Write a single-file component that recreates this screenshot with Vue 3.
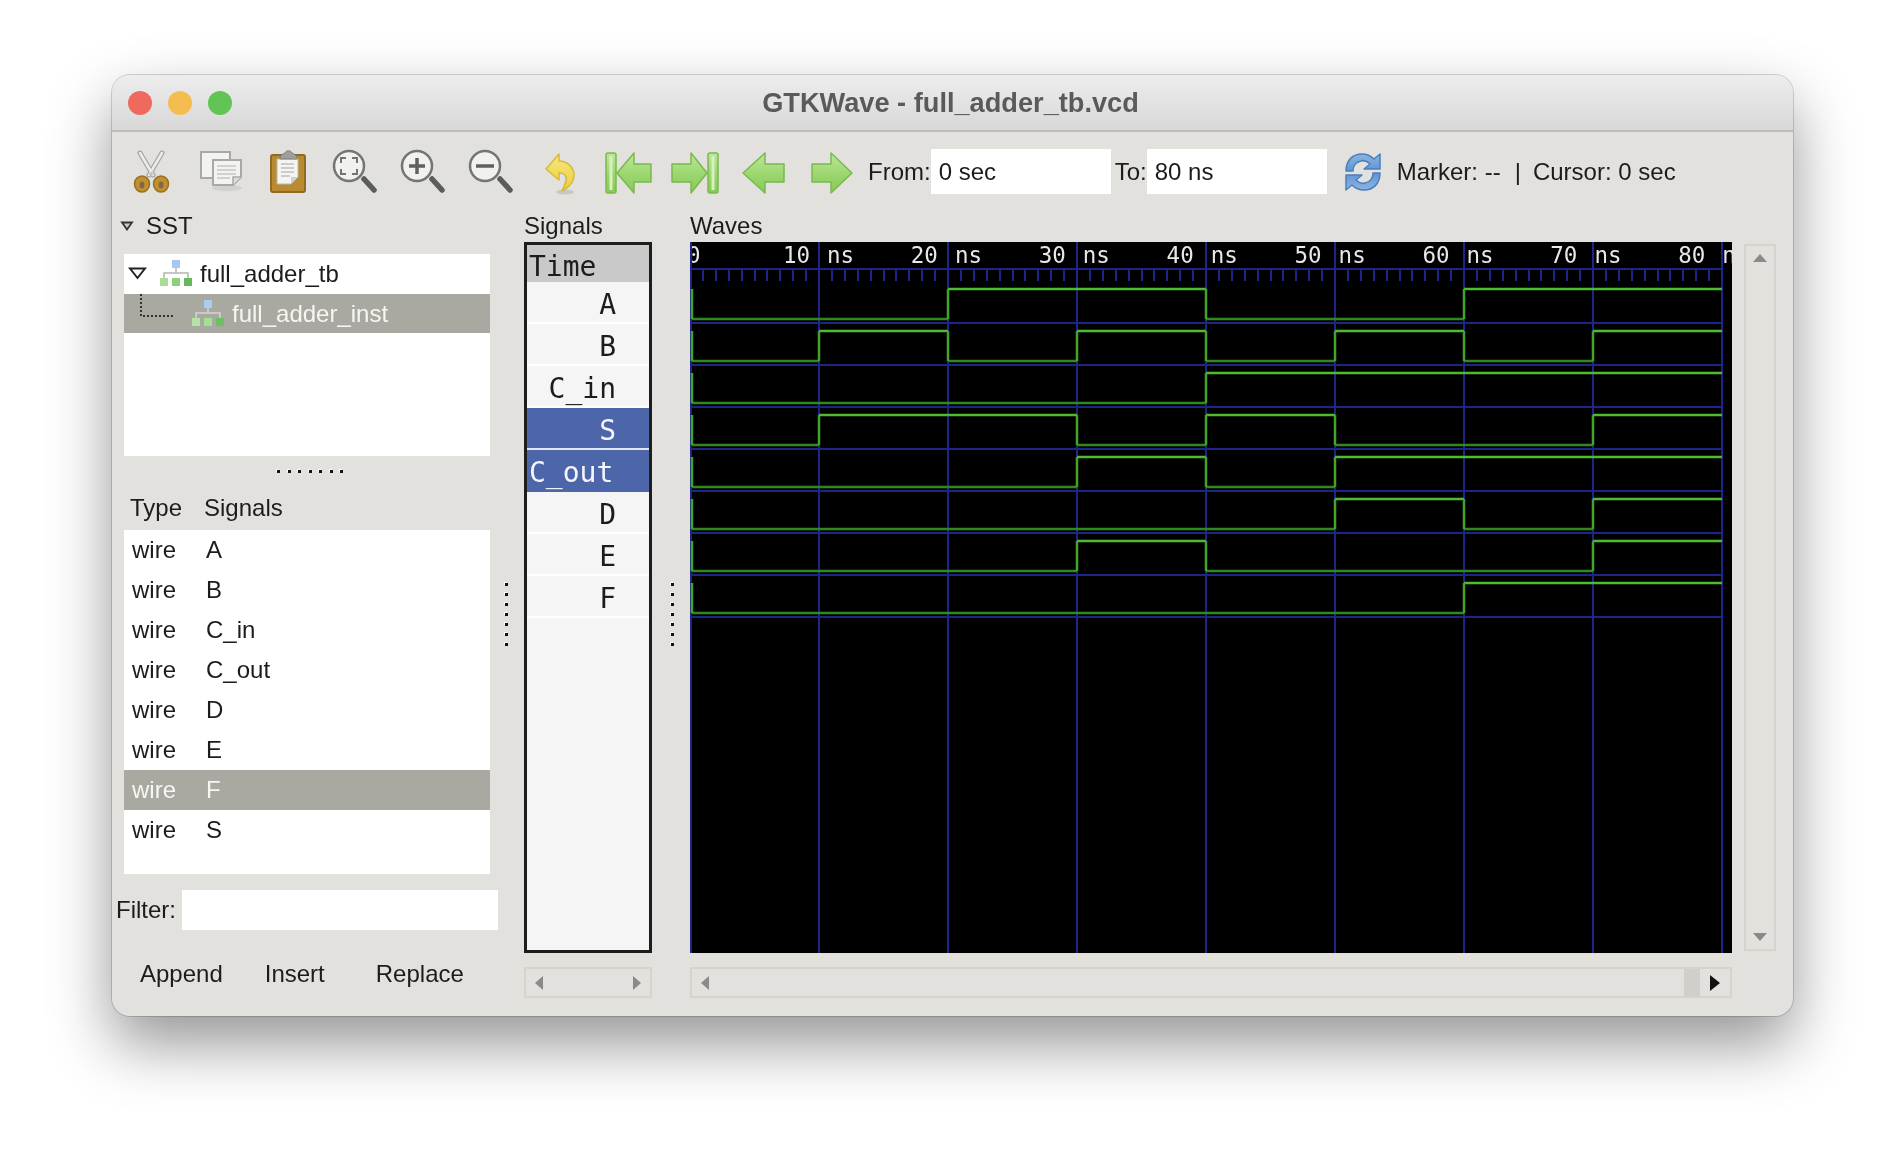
<template>
  <div class="page">
    <div class="window">
      <div class="titlebar">
        <div class="lights">
          <span class="light red"></span>
          <span class="light yellow"></span>
          <span class="light green"></span>
        </div>
        <div class="title">GTKWave - full_adder_tb.vcd</div>
      </div>

      <div class="toolbar">
        <svg width="0" height="0" class="defs">
          <defs>
            <linearGradient id="arrowFill" x1="0" y1="0" x2="0" y2="1">
              <stop offset="0" stop-color="#bce89a" />
              <stop offset="0.55" stop-color="#9ad66e" />
              <stop offset="1" stop-color="#88c858" />
            </linearGradient>
            <linearGradient id="blueFill" x1="0" y1="0" x2="0" y2="1">
              <stop offset="0" stop-color="#8db4e2" />
              <stop offset="1" stop-color="#5f95d2" />
            </linearGradient>
            <linearGradient id="undoFill" x1="0" y1="0" x2="0" y2="1">
              <stop offset="0" stop-color="#f7e77e" />
              <stop offset="1" stop-color="#eccf3c" />
            </linearGradient>
          </defs>
        </svg>

        <!-- cut -->
        <div class="tool">
          <svg width="48" height="48" viewBox="0 0 48 48">
            <path d="M13 5 L26 27 M35 5 L22 27" stroke="#a5a6a2" stroke-width="5" stroke-linecap="round" fill="none" />
            <path d="M13 5 L26 27 M35 5 L22 27" stroke="#ecece9" stroke-width="2.5" stroke-linecap="round" fill="none" />
            <circle cx="24" cy="26" r="2" fill="#c4c5c1" />
            <ellipse cx="15" cy="36" rx="7.5" ry="8" fill="#c08f30" stroke="#9a6f20" stroke-width="1.5" />
            <ellipse cx="34" cy="36" rx="7.5" ry="8" fill="#c08f30" stroke="#9a6f20" stroke-width="1.5" />
            <ellipse cx="15" cy="37" rx="2.4" ry="3.4" fill="#7a6a48" />
            <ellipse cx="34" cy="37" rx="2.4" ry="3.4" fill="#7a6a48" />
          </svg>
        </div>
        <!-- copy -->
        <div class="tool">
          <svg width="48" height="48" viewBox="0 0 48 48">
            <ellipse cx="32" cy="40" rx="15" ry="3" fill="#d2d1cd" />
            <rect x="6" y="4" width="29" height="26" fill="#f3f3f1" stroke="#a8a9a7" stroke-width="2" />
            <path d="M18 12 H46 V29 L38 37 H18 Z" fill="#f3f3f1" stroke="#a8a9a7" stroke-width="2" />
            <path d="M22 18 H41 M22 22 H41 M22 26 H41 M22 30 H35" stroke="#c6c7c5" stroke-width="1.5" />
            <path d="M38 37 V29 H46" fill="#dcdcda" stroke="#a8a9a7" stroke-width="1.5" />
          </svg>
        </div>
        <!-- paste -->
        <div class="tool">
          <svg width="48" height="48" viewBox="0 0 48 48">
            <rect x="8" y="7" width="34" height="37" rx="2" fill="#ba8a30" stroke="#8f6a25" stroke-width="2" />
            <path d="M14 11 H35 V29 L28 36 H14 Z" fill="#f4f4f2" stroke="#b7b7b3" stroke-width="1" />
            <path d="M18 16 H31 M18 20 H31 M18 24 H31 M18 28 H27" stroke="#bfc0bd" stroke-width="1.5" />
            <path d="M28 36 V29 H35 Z" fill="#cfcfcc" />
            <path d="M17 11 C17 6 21 6 22 5 C23 2 28 2 29 5 C30 6 34 6 34 11 Z" fill="#9e9f9c" stroke="#7e7f7c" stroke-width="1" />
          </svg>
        </div>
        <!-- zoom fit -->
        <div class="tool">
          <svg width="48" height="48" viewBox="0 0 48 48">
            <path d="M33 31 L43 42" stroke="#5b5d5b" stroke-width="5.5" stroke-linecap="round" />
            <circle cx="18" cy="18" r="15" fill="#f1f1ef" stroke="#737573" stroke-width="2.5" />
            <path d="M10 15 V10 H15 M21 10 H26 V15 M26 21 V26 H21 M15 26 H10 V21" fill="none" stroke="#737573" stroke-width="2" />
          </svg>
        </div>
        <!-- zoom in -->
        <div class="tool">
          <svg width="48" height="48" viewBox="0 0 48 48">
            <path d="M33 31 L43 42" stroke="#5b5d5b" stroke-width="5.5" stroke-linecap="round" />
            <circle cx="18" cy="18" r="15" fill="#f1f1ef" stroke="#737573" stroke-width="2.5" />
            <path d="M10 18 H26 M18 10 V26" stroke="#5f615f" stroke-width="3.5" />
          </svg>
        </div>
        <!-- zoom out -->
        <div class="tool">
          <svg width="48" height="48" viewBox="0 0 48 48">
            <path d="M33 31 L43 42" stroke="#5b5d5b" stroke-width="5.5" stroke-linecap="round" />
            <circle cx="18" cy="18" r="15" fill="#f1f1ef" stroke="#737573" stroke-width="2.5" />
            <path d="M9 18 H27" stroke="#5f615f" stroke-width="3.5" />
          </svg>
        </div>
        <!-- undo -->
        <div class="tool">
          <svg width="48" height="48" viewBox="0 0 48 48">
            <ellipse cx="30" cy="44" rx="9" ry="2.5" fill="#c8c7c2" />
            <path d="M11 21 L24 6 V13 C33 13 39 20 39 27 C39 35 33 40 27 43 C30 37 32 33 31 29 C30 26 27 25 24 25 V32 Z" fill="url(#undoFill)" stroke="#d6bb36" stroke-width="1.5" stroke-linejoin="round" />
          </svg>
        </div>
        <!-- first / last / left / right -->
        <div class="tool">
          <svg width="48" height="48" viewBox="0 0 48 48" class="over">
            <rect x="3" y="5" width="10" height="40" rx="2" fill="url(#arrowFill)" stroke="#7ab94c" stroke-width="1.5" />
            <rect x="6.5" y="8" width="3" height="34" fill="#d6f1bd" />
            <path d="M14 25 L31 5 V16 H48 V34 H31 V45 Z" fill="url(#arrowFill)" stroke="#7ab94c" stroke-width="1.5" stroke-linejoin="round" />
          </svg>
        </div>
        <div class="tool">
          <svg width="48" height="48" viewBox="0 0 48 48" class="over">
            <rect x="37" y="5" width="10" height="40" rx="2" fill="url(#arrowFill)" stroke="#7ab94c" stroke-width="1.5" />
            <rect x="40.5" y="8" width="3" height="34" fill="#d6f1bd" />
            <path d="M36 25 L20 5 V16 H1 V34 H20 V45 Z" fill="url(#arrowFill)" stroke="#7ab94c" stroke-width="1.5" stroke-linejoin="round" />
          </svg>
        </div>
        <div class="tool">
          <svg width="48" height="48" viewBox="0 0 48 48">
            <path d="M4 25 L26 5 V16 H45 V34 H26 V45 Z" fill="url(#arrowFill)" stroke="#7ab94c" stroke-width="1.5" stroke-linejoin="round" />
          </svg>
        </div>
        <div class="tool">
          <svg width="48" height="48" viewBox="0 0 48 48">
            <path d="M45 25 L24 5 V16 H5 V34 H24 V45 Z" fill="url(#arrowFill)" stroke="#7ab94c" stroke-width="1.5" stroke-linejoin="round" />
          </svg>
        </div>

        <span class="lbl from">From:</span>
        <div class="entry">0 sec</div>
        <span class="lbl to">To:</span>
        <div class="entry">80 ns</div>
        <svg class="refresh" width="48" height="48" viewBox="0 0 48 48">
          <path d="M7 23 C7 12 14 6 23 6 C28 6 32 8 35 11 L41 6 V21 H25 L31 16 C28 13 25 12 22 13 C17 14 14 18 14 23 Z" fill="url(#blueFill)" stroke="#4a7fbd" stroke-width="1.5" stroke-linejoin="round" />
          <path d="M7 23 C7 12 14 6 23 6 C28 6 32 8 35 11 L41 6 V21 H25 L31 16 C28 13 25 12 22 13 C17 14 14 18 14 23 Z" transform="rotate(180 24 24)" fill="url(#blueFill)" stroke="#4a7fbd" stroke-width="1.5" stroke-linejoin="round" />
        </svg>
        <span class="lbl marker">Marker: --</span>
        <span class="lbl bar">|</span>
        <span class="lbl">Cursor: 0 sec</span>
      </div>

      <div class="main">
        <!-- left side: hierarchy and signal list -->
        <div class="left">
          <div class="sst-head">
            <svg width="14" height="10" viewBox="0 0 14 10"><path d="M2 1.5 H12 L7 8.5 Z" fill="#c9c8c4" stroke="#333" stroke-width="1.8" /></svg>
            <span>SST</span>
          </div>
          <div class="tree">
            <div class="tree-row">
              <svg class="expander" width="19" height="13" viewBox="0 0 19 13"><path d="M2 1.5 H17 L9.5 11 Z" fill="#fff" stroke="#222" stroke-width="2" /></svg>
              <svg class="mod" width="34" height="28" viewBox="0 0 34 28">
                <path d="M17 8 V13 M5 18 V13 H29 V18" fill="none" stroke="#b5b5b2" stroke-width="1.5" />
                <rect x="13" y="0" width="8" height="8" fill="#a5c8ef" />
                <rect x="1" y="18" width="8" height="8" fill="#a9dc96" />
                <rect x="13" y="18" width="8" height="8" fill="#8ecf7c" />
                <rect x="25" y="18" width="8" height="8" fill="#66b95a" />
              </svg>
              <span>full_adder_tb</span>
            </div>
            <div class="tree-row selected">
              <svg class="dotted" width="36" height="40" viewBox="0 0 36 40">
                <path d="M1 0 V22 H35" fill="none" stroke="#333" stroke-width="2" stroke-dasharray="2 2" />
              </svg>
              <svg class="mod" width="34" height="28" viewBox="0 0 34 28">
                <path d="M17 8 V13 M5 18 V13 H29 V18" fill="none" stroke="#d6d6d2" stroke-width="1.5" />
                <rect x="13" y="0" width="8" height="8" fill="#a9cdf2" />
                <rect x="1" y="18" width="8" height="8" fill="#b5e5a4" />
                <rect x="13" y="18" width="8" height="8" fill="#a5e092" />
                <rect x="25" y="18" width="8" height="8" fill="#6dc060" />
              </svg>
              <span>full_adder_inst</span>
            </div>
          </div>
          <div class="hsash"><span v-for="n in 7" :key="n" class="grip"></span></div>
          <div class="list-head"><span class="col-type">Type</span><span>Signals</span></div>
          <div class="list">
            <div v-for="s in listNames" :key="s" class="list-row" :class="{ selected: s === 'F' }">
              <span class="col-type">wire</span><span>{{ s }}</span>
            </div>
          </div>
          <div class="filter">
            <span>Filter:</span>
            <div class="entry filter-entry"></div>
          </div>
          <div class="buttons">
            <span class="btn-append">Append</span>
            <span class="btn-insert">Insert</span>
            <span class="btn-replace">Replace</span>
          </div>
        </div>

        <div class="vsash"><span v-for="n in 7" :key="n" class="grip"></span></div>

        <!-- signal names -->
        <div class="signals">
          <div class="pane-label">Signals</div>
          <div class="names">
            <div class="name-row time">Time</div>
            <div
              v-for="s in signals"
              :key="s.name"
              class="name-row"
              :class="{ sel: s.sel, wide: s.name === 'C_out' }"
            >{{ s.name }}</div>
          </div>
          <div class="hscroll">
            <svg width="10" height="16" viewBox="0 0 10 16"><path d="M9 1 V15 L1 8 Z" fill="#8a8a88" /></svg>
            <svg width="10" height="16" viewBox="0 0 10 16"><path d="M1 1 V15 L9 8 Z" fill="#8a8a88" /></svg>
          </div>
        </div>

        <div class="vsash second"><span v-for="n in 7" :key="n" class="grip"></span></div>

        <!-- waves -->
        <div class="waves">
          <div class="pane-label">Waves</div>
          <svg class="wave-svg" width="1042" height="711" viewBox="0 0 1042 711">
            <rect width="1042" height="711" fill="#000" />
            <g class="ruler-text">
              <text x="-3" y="21" fill="#e8e8e8">0</text>
              <template v-for="t in labels" :key="t">
                <text :x="labelX(t)" y="21" text-anchor="end" fill="#e8e8e8">{{ t }}</text>
                <text :x="labelX(t) + 17" y="21" fill="#e8e8e8">ns</text>
              </template>
            </g>
            <path :d="gridPath" stroke="#1e2488" stroke-width="2" fill="none" />
            <path :d="tickPath" stroke="#1e2488" stroke-width="2" fill="none" />
            <g v-for="w in wavePaths" :key="w.name" fill="none" stroke-width="2.5">
              <path :d="w.low" stroke="#2f8a1e" />
              <path :d="w.high" stroke="#4fbb2e" />
              <path :d="w.edges" stroke="#43a528" />
            </g>
          </svg>
          <div class="hscroll wide-scroll">
            <svg width="10" height="16" viewBox="0 0 10 16"><path d="M9 1 V15 L1 8 Z" fill="#8a8a88" /></svg>
            <div class="thumb"></div>
            <div class="end-btn">
              <svg width="12" height="18" viewBox="0 0 12 18"><path d="M1 1 V17 L11 9 Z" fill="#111" /></svg>
            </div>
          </div>
        </div>

        <div class="vscroll">
          <svg width="16" height="10" viewBox="0 0 16 10"><path d="M1 9 H15 L8 1 Z" fill="#8a8a88" /></svg>
          <svg width="16" height="10" viewBox="0 0 16 10"><path d="M1 1 H15 L8 9 Z" fill="#8a8a88" /></svg>
        </div>
      </div>
    </div>
  </div>
</template>

<script setup>
import { computed } from 'vue'

const listNames = ['A', 'B', 'C_in', 'C_out', 'D', 'E', 'F', 'S']

// high intervals in ns, everything else is low
const signals = [
  { name: 'A', high: [[20, 40], [60, 80]] },
  { name: 'B', high: [[10, 20], [30, 40], [50, 60], [70, 80]] },
  { name: 'C_in', high: [[40, 80]] },
  { name: 'S', high: [[10, 30], [40, 50], [70, 80]], sel: true },
  { name: 'C_out', high: [[30, 40], [50, 80]], sel: true },
  { name: 'D', high: [[50, 60], [70, 80]] },
  { name: 'E', high: [[30, 40], [70, 80]] },
  { name: 'F', high: [[60, 80]] }
]

const labels = [10, 20, 30, 40, 50, 60, 70, 80]
const ROW = 42

function xOf(t) {
  return Math.round(t * 12.9)
}

// labels step a little tighter than the grid
function labelX(t) {
  return 120 + (t - 10) * 12.79
}

const gridPath = computed(() => {
  let d = ''
  for (let t = 0; t <= 80; t += 10) d += `M${Math.max(xOf(t), 1)} 0V711`
  d += `M0 27H${xOf(80)}`
  signals.forEach((s, i) => {
    d += `M0 ${81 + i * ROW}H${xOf(80)}`
  })
  return d
})

const tickPath = computed(() => {
  let d = ''
  for (let t = 0; t < 80; t++) {
    if (t % 10 !== 0) d += `M${xOf(t)} 27V39`
  }
  return d
})

const wavePaths = computed(() =>
  signals.map((s, i) => {
    const hi = 47 + i * ROW
    const lo = 77 + i * ROW
    let high = ''
    let low = ''
    let edges = `M2 ${hi}V${lo}`
    let at = 0
    s.high.forEach(([a, b]) => {
      if (a > at) low += `M${Math.max(xOf(at), 2)} ${lo}H${xOf(a)}`
      high += `M${xOf(a)} ${hi}H${xOf(b)}`
      if (a > 0) edges += `M${xOf(a)} ${hi}V${lo}`
      if (b < 80) edges += `M${xOf(b)} ${hi}V${lo}`
      at = b
    })
    if (at < 80) low += `M${xOf(at)} ${lo}H${xOf(80)}`
    return { name: s.name, high, low, edges }
  })
)
</script>

<style>
html,
body {
  margin: 0;
  background: #fff;
}
</style>

<style scoped>
.page {
  width: 1904px;
  height: 1164px;
  padding: 75px 0 0 112px;
  box-sizing: border-box;
  overflow: hidden;
  background: #fff;
  font-family: "Liberation Sans", Arial, sans-serif;
  font-size: 24px;
  color: #1c1c1c;
}
.window {
  width: 1681px;
  height: 941px;
  background: #e2e1dd;
  border-radius: 18px;
  box-shadow: 0 0 0 1px rgba(0, 0, 0, 0.16), 0 28px 62px rgba(0, 0, 0, 0.42);
  overflow: hidden;
  filter: blur(0.6px);
}
.titlebar {
  height: 54px;
  padding-top: 1px;
  display: flex;
  align-items: center;
  position: relative;
  background: linear-gradient(#ededed, #d8d8d8);
  border-bottom: 2px solid #bcbcba;
  box-sizing: content-box;
}
.lights {
  display: flex;
  gap: 16px;
  padding-left: 16px;
}
.light {
  width: 24px;
  height: 24px;
  border-radius: 50%;
}
.red { background: #ee6a5f; }
.yellow { background: #f5bd4f; }
.green { background: #61c454; }
.title {
  position: absolute;
  left: 0;
  right: 0;
  text-align: center;
  padding-right: 4px;
  font-weight: 700;
  font-size: 27.2px;
  color: #5a5a5a;
}
.toolbar {
  height: 79px;
  display: flex;
  align-items: center;
  padding-left: 5px;
}
.defs {
  display: block;
  flex: none;
  width: 0;
  height: 0;
}
.tool {
  width: 68px;
  display: flex;
  justify-content: center;
  flex: none;
}
.over {
  overflow: visible;
}
.lbl {
  white-space: nowrap;
}
.from {
  margin-left: 3px;
}
.to {
  margin-left: 4px;
}
.entry {
  width: 180px;
  height: 45px;
  line-height: 45px;
  padding-left: 8px;
  box-sizing: border-box;
  background: #fff;
  flex: none;
}
.refresh {
  margin-left: 12px;
  flex: none;
}
.marker {
  margin-left: 10px;
}
.bar {
  margin: 0 12px 0 14px;
}
.main {
  display: flex;
  padding-left: 5px;
}
.left {
  width: 381px;
  flex: none;
}
.sst-head {
  height: 43px;
  display: flex;
  align-items: center;
  padding: 0 0 14px 3px;
  box-sizing: border-box;
  gap: 12px;
}
.tree {
  margin-left: 7px;
  width: 366px;
  height: 202px;
  background: #fff;
}
.tree-row {
  height: 39px;
  margin-bottom: 1px;
  display: flex;
  align-items: center;
  white-space: nowrap;
}
.expander {
  margin-left: 4px;
}
.tree-row .mod {
  margin-left: 12px;
  margin-right: 7px;
}
.tree-row.selected {
  background: #a9a8a1;
  color: #f6f6f3;
}
.dotted {
  margin-left: 16px;
  align-self: flex-start;
}
.tree-row.selected .mod {
  margin-left: 15px;
}
.hsash {
  height: 31px;
  margin-left: 160px;
  display: flex;
  align-items: center;
  gap: 7.5px;
}
.grip {
  width: 3px;
  height: 3px;
  flex: none;
  background: #111;
  box-shadow: -1px -1px 0 #fff;
}
.list-head {
  height: 43px;
  display: flex;
  align-items: center;
  padding-left: 13px;
  padding-bottom: 1px;
  box-sizing: border-box;
}
.col-type {
  width: 74px;
  flex: none;
}
.list {
  margin-left: 7px;
  width: 366px;
  height: 344px;
  background: #fff;
}
.list-row {
  height: 40px;
  display: flex;
  align-items: center;
  padding-left: 8px;
}
.list-row.selected {
  background: #a9a8a1;
  color: #f6f6f3;
}
.filter {
  margin-top: 16px;
  margin-left: -1px;
  height: 40px;
  display: flex;
  align-items: center;
  gap: 6px;
}
.filter-entry {
  width: 316px;
  height: 40px;
}
.buttons {
  height: 88px;
  display: flex;
  align-items: center;
  box-sizing: border-box;
}
.btn-append { margin-left: 23px; }
.btn-insert { margin-left: 42px; }
.btn-replace { margin-left: 51px; }
.vsash {
  width: 26px;
  height: 711px;
  margin-top: 31px;
  flex: none;
  display: flex;
  flex-direction: column;
  gap: 7px;
  padding: 341px 0 0 7px;
  box-sizing: border-box;
}
.vsash.second {
  width: 38px;
  padding-left: 19px;
}
.signals {
  width: 128px;
  flex: none;
}
.pane-label {
  height: 31px;
  line-height: 30px;
}
.names {
  height: 711px;
  box-sizing: border-box;
  border: 3px solid #1d1d1d;
  background: #f5f5f5;
  font-family: "DejaVu Sans Mono", monospace;
  font-size: 28px;
}
.name-row {
  height: 42px;
  line-height: 45px;
  padding-right: 33px;
  text-align: right;
  box-sizing: border-box;
  border-bottom: 2px solid #fff;
}
.name-row.time {
  height: 37px;
  line-height: 44px;
  background: #c9c9c9;
  text-align: left;
  padding-left: 2px;
  border-bottom: none;
  overflow: hidden;
}
.name-row.sel {
  background: #4c66a9;
  color: #f4f6fb;
  border-bottom-color: #dfe5f4;
}
.name-row.wide {
  text-align: left;
  padding-left: 2px;
  border-bottom-color: #4c66a9;
}
.hscroll {
  height: 31px;
  margin-top: 14px;
  border: 2px solid #d5d4cf;
  box-sizing: border-box;
  display: flex;
  align-items: center;
  justify-content: space-between;
  padding: 0 8px;
}
.waves {
  width: 1042px;
  flex: none;
}
.wave-svg {
  display: block;
}
.ruler-text text {
  font-family: "DejaVu Sans Mono", monospace;
  font-size: 22.5px;
}
.wide-scroll {
  padding-right: 0;
}
.thumb {
  width: 16px;
  height: 27px;
  margin-left: auto;
  background: #d0cfca;
}
.end-btn {
  width: 30px;
  height: 27px;
  display: flex;
  align-items: center;
  justify-content: center;
}
.vscroll {
  width: 32px;
  height: 707px;
  margin: 33px 0 0 12px;
  padding: 7px 0;
  box-sizing: border-box;
  border: 2px solid #d5d4cf;
  flex: none;
  display: flex;
  flex-direction: column;
  align-items: center;
  justify-content: space-between;
}
</style>
